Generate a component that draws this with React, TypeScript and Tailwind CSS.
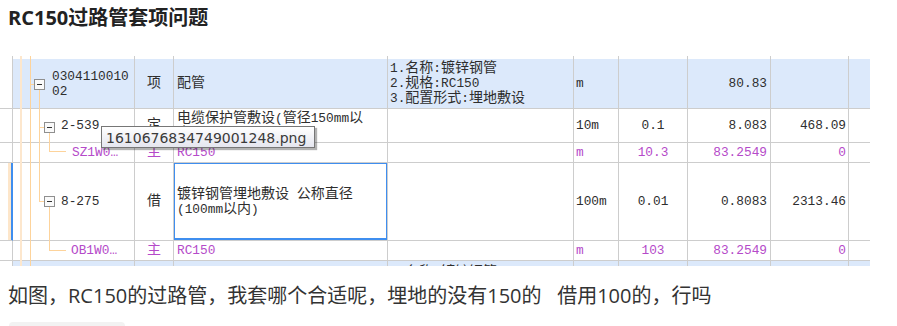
import React from "react";

const CJK = /([\u2e80-\u9fff\u3000-\u303f\uff00-\uffef]+)/;

// SimSun-like look: CJK at 14px, latin at a narrower mono size
function Mix({ s }: { s: string }) {
  return (
    <>
      {s.split(CJK).map((part, i) =>
        part === "" ? null : CJK.test(part) ? (
          <span key={i} className="text-[14px]">
            {part}
          </span>
        ) : (
          <span key={i} className="text-[12.8px]">
            {part}
          </span>
        )
      )}
    </>
  );
}

const GRID =
  "grid grid-cols-[12px_122px_39px_214px_186px_45px_69px_83px_78px_22px]";
const LINE = "border-[#cdcdcd]";

type RowProps = {
  h: string;
  blue?: boolean;
  sub?: boolean;
  active?: boolean;
  top?: boolean;
  pad: string;
  code?: React.ReactNode;
  kind?: string;
  name?: React.ReactNode;
  desc?: React.ReactNode;
  unit?: string;
  qty?: string;
  amount?: string;
  price?: string;
};

function Row(p: RowProps) {
  const bg = p.blue ? "bg-[#dce9fb]" : "bg-white";
  const tone = p.sub ? "text-[#b54ac9]" : "text-[#2e2e2e]";
  const cell = `border-l border-b ${LINE} flex items-center overflow-hidden whitespace-nowrap`;
  return (
    <div className={`${GRID} ${p.h} ${tone}`}>
      <div className={`border-b ${LINE} flex`}>
        {p.active && (
          <>
            <div className="w-[8px]" />
            <div className="w-[3px] bg-[#fde6ca]" />
            <div className="w-[1px] bg-[#3f8eef]" />
          </>
        )}
      </div>
      <div
        className={`${cell} ${bg} ${p.pad} ${p.active ? "border-l-[#3f8eef]" : ""}`}
      >
        <div>{p.code}</div>
      </div>
      <div className={`${cell} ${bg} justify-center`}>
        {p.kind && <Mix s={p.kind} />}
      </div>
      <div className={`${cell} ${bg} pl-[3px] relative`}>
        <div>{p.name}</div>
        {p.active && (
          <span className="absolute -left-px -top-px -right-px bottom-0 border-2 border-[#3f8eef]" />
        )}
      </div>
      <div
        className={`${cell} ${bg} pl-[2px] ${p.top ? "items-start pt-[4px]" : ""}`}
      >
        <div>{p.desc}</div>
      </div>
      <div className={`${cell} ${bg} pl-[2px]`}>{p.unit}</div>
      <div className={`${cell} ${bg} justify-center`}>{p.qty}</div>
      <div className={`${cell} ${bg} justify-end pr-[3px]`}>{p.amount}</div>
      <div className={`${cell} ${bg} justify-end pr-[2px]`}>{p.price}</div>
      <div className={`${cell} ${bg}`} />
    </div>
  );
}

function TreeBox({ x, y }: { x: number; y: number }) {
  return (
    <g>
      <rect x={x + 0.5} y={y + 0.5} width={10} height={10} fill="#fafafa" stroke="#8f8f8f" />
      <rect x={x + 3} y={y + 5} width={5} height={1} fill="#333" />
    </g>
  );
}

function TreeLines() {
  return (
    <svg
      className="absolute left-0 top-0 pointer-events-none"
      width={870}
      height={210}
      viewBox="0 0 870 210"
    >
      <rect x={20} y={0} width={2} height={210} fill="#fde7cd" />
      <rect x={30} y={0} width={1} height={210} fill="#fdd39b" />
      {/* 030411001002 */}
      <rect x={31} y={28} width={3} height={1} fill="#fdd39b" />
      <rect x={39} y={34} width={1} height={112} fill="#fdd39b" />
      <rect x={40} y={71} width={4} height={1} fill="#fdd39b" />
      <rect x={40} y={145} width={4} height={1} fill="#fdd39b" />
      <TreeBox x={34} y={23} />
      {/* 2-539 */}
      <rect x={49} y={77} width={1} height={19} fill="#fdd39b" />
      <rect x={49} y={95} width={17} height={1} fill="#fdd39b" />
      <TreeBox x={44} y={66} />
      {/* 8-275 */}
      <rect x={49} y={151} width={1} height={44} fill="#fdd39b" />
      <rect x={49} y={194} width={17} height={1} fill="#fdd39b" />
      <TreeBox x={44} y={140} />
    </svg>
  );
}

function Capture() {
  return (
    <div className="relative mt-[24px] w-[870px] h-[210px] overflow-hidden bg-white font-['Liberation_Mono','Noto_Sans_CJK_SC',monospace] text-[12.8px] leading-[15px]">
      <div className={`${GRID} h-[3px]`}>
        <div />
        <div className={`border-l ${LINE}`} />
        <div className={`border-l ${LINE}`} />
        <div className={`border-l ${LINE}`} />
        <div className={`border-l ${LINE}`} />
        <div className={`border-l ${LINE}`} />
        <div className={`border-l ${LINE}`} />
        <div className={`border-l ${LINE}`} />
        <div className={`border-l ${LINE}`} />
        <div className={`border-l ${LINE}`} />
      </div>
      <Row
        h="h-[50px]"
        blue
        pad="pl-[39px]"
        code={
          <>
            0304110010
            <br />
            02
          </>
        }
        kind="项"
        name={<Mix s="配管" />}
        desc={
          <>
            <Mix s="1.名称:镀锌钢管" />
            <br />
            <Mix s="2.规格:RC150" />
            <br />
            <Mix s="3.配置形式:埋地敷设" />
          </>
        }
        unit="m"
        amount="80.83"
      />
      <Row
        h="h-[34px]"
        pad="pl-[48px]"
        code="2-539"
        kind="定"
        name={
          <>
            <Mix s="电缆保护管敷设(管径150mm以" />
            <br />
            <Mix s="内)" />
          </>
        }
        unit="10m"
        qty="0.1"
        amount="8.083"
        price="468.09"
      />
      <Row
        h="h-[20px]"
        sub
        pad="pl-[59px]"
        code="SZ1W0…"
        kind="主"
        name="RC150"
        unit="m"
        qty="10.3"
        amount="83.2549"
        price="0"
      />
      <Row
        h="h-[78px]"
        active
        pad="pl-[48px]"
        code="8-275"
        kind="借"
        name={
          <>
            <Mix s="镀锌钢管埋地敷设 公称直径" />
            <br />
            <Mix s="(100mm以内)" />
          </>
        }
        unit="100m"
        qty="0.01"
        amount="0.8083"
        price="2313.46"
      />
      <Row
        h="h-[20px]"
        sub
        pad="pl-[58px]"
        code="OB1W0…"
        kind="主"
        name="RC150"
        unit="m"
        qty="103"
        amount="83.2549"
        price="0"
      />
      <Row
        h="h-[50px]"
        blue
        top
        pad="pl-[39px]"
        desc={<Mix s="1.名称:镀锌钢管" />}
      />
      <TreeLines />
      <div className="absolute left-[101px] top-[70px] w-[214px] h-[22px] border border-[#767676] bg-gradient-to-b from-white to-[#e5e6ef] shadow-[2px_2px_1px_rgba(0,0,0,0.3)] pl-[4px] pt-[2px] leading-[18px] text-[14px] text-[#3a3a3a] font-['DejaVu_Sans',sans-serif]">
        1610676834749001248.png
      </div>
    </div>
  );
}

export default function App() {
  return (
    <div className="w-[897px] h-[326px] overflow-hidden bg-white">
      <h1 className="px-2 pt-[4px] text-[20px] leading-[28px] font-bold text-[#222] font-['Open_Sans','Noto_Sans_CJK_SC',sans-serif]">
        RC150过路管套项问题
      </h1>
      <Capture />
      <p className="mt-[16px] px-2 text-[20px] leading-[28px] text-[#333] whitespace-pre font-['Open_Sans','Noto_Sans_CJK_SC',sans-serif]">
        如图，RC150的过路管，我套哪个合适呢，埋地的没有150的   借用100的，行吗
      </p>
      <div className="mt-[12px] ml-[9px] w-[116px] h-[30px] rounded-[4px] bg-[#f2f2f2]" />
    </div>
  );
}
